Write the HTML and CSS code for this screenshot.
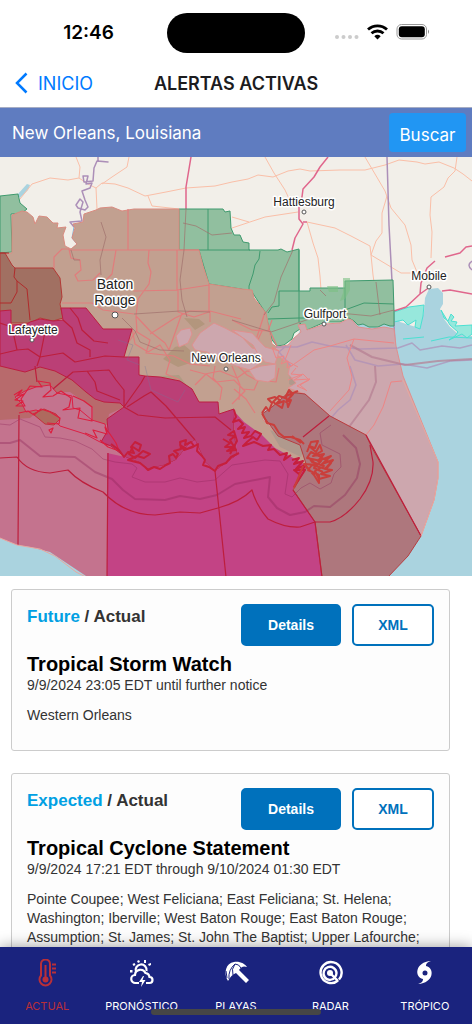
FILE: index.html
```html
<!DOCTYPE html>
<html lang="es">
<head>
    <meta charset="UTF-8">
    <meta name="viewport" content="width=device-width, initial-scale=1">
    <title>Alertas Activas</title>
    <link rel="stylesheet" href="styles.css">
</head>
<body>
  <div class="status">
    <span class="clock">12:46</span>
    <span class="island"></span>
    <span class="signals">
      <svg width="96" height="20" viewBox="0 0 96 20">
        <g fill="#ccc"><circle cx="3" cy="14" r="2"/><circle cx="9.500" cy="14" r="2"/><circle cx="16" cy="14" r="2"/><circle cx="22.500" cy="14" r="2"/></g>
        <g fill="none" stroke="#000" stroke-width="2.800"><path d="M34 6.500a14 14 0 0 1 19 0"/><path d="M37.500 10.300a9 9 0 0 1 12 0"/></g>
        <path d="M40.300 13.200a5 5 0 0 1 6.400 0L43.500 16.500z"/>
        <rect x="63" y="1.500" width="29.500" height="14.500" rx="4.500" fill="#fff" stroke="#999"/>
        <rect x="64.800" y="3.300" width="26" height="11" rx="3"/>
        <path d="M94 6.500q2 2.200 0 4.500z" fill="#888"/>
      </svg>
    </span>
  </div>
  <header class="nav">
    <a class="back" href="#">
      <svg width="13" height="22" viewBox="0 0 13 22"><path d="M11.500 1.500 2 11l9.500 9.500" fill="none" stroke="#007aff" stroke-width="2.500"/></svg>
      INICIO
    </a>
    <h1>ALERTAS ACTIVAS</h1>
  </header>
  <form class="search">
    <input type="text" id="place" aria-label="Lugar" value="New Orleans, Louisiana">
    <button type="button">Buscar</button>
  </form>

  <svg class="map" viewBox="0 157 472 419">
    <rect x="0" y="157" width="472" height="419" fill="#f2efe9"/>
    <!-- gulf and mobile bay -->
    <path fill="#aad3df" d="M0 400H270L300 330 394 314 400 322 419 328 424 312 425 298 429 289 438 288 443 293 443 304 440 309 444 319 450 327 458 334 472 336V577H0z"/>
    <path fill="#97e8dc" stroke="#4be0d2" d="M394 312 409 307 424 305 423 316 420 329 415 327 416 320 408 325 403 320 394 322z"/>
    <path fill="#97e8dc" stroke="#4be0d2" d="M441 310 444 318 448 321 451 314 454 317 451 321 457 322 455 326 472 325V334L467 338 462 334 449 340 455 336 458 332 450 325z"/>
    <path fill="none" stroke="#4be0d2" d="M403 339 424 337M431 341 449 337 472 338"/>
    <path fill="#aad3df" d="M17 195 27 184 30 185 28 190 20 198z"/>

    <!-- roads -->
    <g class="road">
      <path d="M0 210 20 199 32 184 50 178 68 180 79 178 88 184 96 188 102 183 115 184 128 188 145 196 166 192 186 188 215 186 232 182 248 179 258 175 273 177 288 171 300 169 310 171 340 170 365 170 385 165 399 160 417 162 425 164 439 162 454 168 463 174 472 181"/>
      <path d="M76 157 80 167 79 178M129 157 127 167 112 177 102 184M96 188 97 209M148 196 152 206 179 209M232 217 249 222M265 157 274 173 285 190 292 205M232 228 265 217 298 212M307 222 335 228 351 236 370 246 371 255 401 273 412 273M307 222 313 243 318 258 320 276 321 290M365 157 385 191 391 208 405 225 411 245 412 260 417 272M387 196 382 213 382 233 376 241 371 255 373 275 374 282M457 157 455 171 448 178 444 187 431 197 430 215 432 232 431 258M97 209 101 222"/>
    </g>
    <path class="interstate" d="M191 157 186 187V209M328 157 320 167 314 177 303 189 302 197 299 207V219L303 224 295 238 292 250M303 222 307 222M394 311 406 307 420 294 427 289 429 287M420 294 421 283 427 268 435 261M445 257 460 253 466 247 472 246M442 291 450 290 472 294"/>
    <path class="river" d="M98 157V161L108 162 97 161 94 168 93 181 84 182 83 176 88 176 86 184 92 183 90 188 82 191 85 200 88 207 85 210 78 208 76 205 80 199 83 202 80 212 82 221 70 222 74 227"/>
    <path class="river" d="M387 157 389 225 392 281 395 345"/>
    <path class="river" d="M472 261q-6 4 0 9"/>
    <path d="M74 227 72 238 77 244 71 250" fill="none" stroke="#7eb5d6"/>

    <!-- green counties -->
    <g class="green">
      <path d="M0 196 18 194 20 203 27 209 22 213 11 214 12 252 0 253z"/>
      <path d="M179 209H223L225 212 230 211 231 228 234 235H240L243 242 249 243V250H278L281 249 287 252 299 249V291H310V288H345V281L393 280 394 311V326L390 326 384 324 378 327 369 327 363 324 358 325 354 321 349 318 340 322 325 322 307 330 300 323 300 329 294 333 292 339 284 345 277 346 272 340 265 312 252 292 241 289 209 284 199 250 179 250z"/>
      <path d="M208 209V250M199 250H250M260 251 259 259 255 265 253 274 249 286V290M299 250V322M299 291H279V306L272 307 268 313M345 288V309M268 319 299 318 324 318 345 310 364 303 394 304" />
    </g>
    <path d="M327 286h11v6h-9zM343 278h7v12l-5 9-5 2 3-8z" fill="#7bbf83" opacity=".6"/>

    <!-- tan parishes -->
    <path class="tan" d="M12 215 22 211 27 212 33 217 35 224 39 216 47 217 53 223 58 223 57 228 66 227 63 235 65 246 71 249 77 244 72 238 75 228 73 224 83 222 84 214 96 210 100 208 112 207 122 211 134 209H179V250H199L203 266 209 284 241 289 252 290 254 298 266 313 272 344 277 347 284 355 296 368 300 385 300 394 280 402 263 411 263 420 280 436 310 450 307 470 290 462 240 440 180 400 60 350 0 320V254L12 253z"/>
    <path fill="#a98f71" d="M175 347 184 345 190 350 190 363 178 367 163 359zM184 318 199 319 205 324 195 330z" opacity=".6"/>
    <path fill="#b0998d" d="M270 430 290 438 304 448 301 457 280 447zM290 371 297 374 297 388 289 384z"/>
    <path fill="#a1987c" d="M160 376 179 375 187 386 178 386z" opacity=".6"/>
    <g class="parish">
      <path d="M128 209V250M70 250H199M177 250V290L209 285M209 284V312L194 317 178 312V290L134 291 139 291M116 250 112 274 105 281M149 250 148 263 151 272 149 284 138 299 136 316 151 332 165 343 169 350 182 313M210 311 241 319M210 311V322M54 293V268L54 257 62 249 69 249 71 258 80 260 81 270 75 275 78 281 93 280 100 273M136 316 137 332 150 340 146 353 174 356 190 364 210 366M150 334 175 318 190 311 210 311M137 330 128 343 118 333M62 303H92L103 310 134 314"/>
      <path d="M132 328 135 344 148 352 160 345 170 360 166 374 180 380M190 370 205 374 220 371 237 378 247 371 262 373M195 385 206 374 216 382 234 380 245 391 232 404M238 366 247 375 258 381 254 390 242 389M215 366 213 378 222 388 220 400M250 366 259 380 276 382 279 368M234 389 246 399 255 413M232 366 240 385 239 400"/>
      <path d="M232 320 252 330 270 331 277 346M262 331 257 342 242 338M265 312 255 343M268 331 272 320"/>
    </g>
    <path class="trunk" d="M186 209 184 250 180 280 182 300 187 317M122 318 135 331 140 342 160 350 184 351M134 314 180 311 210 312M101 222 106 237 100 260 101 275M183 223 196 226 212 235 232 233M71 250 74 260 80 260M293 250 281 277 274 302 264 315M232 320 271 332 330 312 350 314 371 316 394 310M320 290 326 296M376 282 380 315"/>

    <!-- open water, watch area -->
    <path class="rose" d="M277 347 288 345 294 338 301 332 298 325 305 324 307 330 325 324 340 323 348 319 352 320 358 327 372 329 384 327 394 329 396 346 403 376 438 462 438 478 434 500 421 536 371 446 366 435 330 416 305 394 288 388 296 383 288 374 290 365 276 354 268 355z"/>
    <path class="rose" d="M192 345 200 333 214 323 225 328 242 337 252 348 267 352 262 362 250 370 236 366 207 352 195 350zM176 336 181 330 190 328 192 334 188 343 179 347zM249 370 261 366 276 364 275 378 268 382 256 380z"/>
    <path class="rose" d="M232 330 253 345 258 354 265 362 275 364 279 351 265 347 252 333z"/>
    <path class="river faint" d="M276 347 297 347 312 342 330 346 360 349 398 348 412 343 420 350 442 346 460 348 472 345M346 345 355 360 378 366 403 364 427 368 450 361 472 360M286 346 279 352 291 366M350 366 356 385 350 400 338 410 326 424"/>
    <path class="purple" d="M375 366 376 382 369 400 343 435M350 345 372 357 405 365 438 361 472 359"/>
    <path class="coral" d="M290 367 314 350 330 346 354 339 394 343M354 339 347 358 352 377 349 390 330 411M402 381 391 382 383 407 374 425 366 435M288 380 303 374 309 380 300 385 307 391M291 345 285 360 298 367M279 351 272 347 276 358 284 356 281 364 288 361 287 368 293 365M296 368 291 374 302 375 294 380 310 379 297 386 306 390"/>

    <!-- west coast and storm area -->
    <path fill="#a17062" stroke="#b33a36" d="M0 253 5 253 12 265 15 268H53L60 278 62 297 60 304 63 318 53 321 40 318 30 323 0 323z"/>
    <path d="M15 268 14 277 17 281 17 292 11 303H0M17 281 27 289 30 320M0 253 9 253" fill="none" stroke="#b02b2b"/>
    <path fill="#c4738e" d="M0 415 20 405 60 380 125 395 125 460 110 460V576H86L68 564 50 552 30 547 17 545 0 538z"/>
    <path fill="#b86a6c" d="M0 360 70 360 124 400 122 408 109 414 107 425 93 420 93 408 70 392 60 392 30 418 0 420z"/>
    <path fill="#c4738e" stroke="#dc2045" d="M15 397 25 391 36 387 50 385 57 393 72 396 73 408 80 410 92 420 105 424 108 436 119 444 108 445 100 442 85 434 60 426 48 414 36 410 26 412 22 404z"/>
    <path fill="#ae6a5e" stroke="#c4303c" d="M33 414 44 409 56 414 60 419 54 425 45 424z"/>
    <path fill="#bb3f76" stroke="#bd1e40" d="M0 311 11 310V325L27 324 30 322 40 319 53 321 63 320 61 308 86 308 103 329 132 329 124 357H139V375L145 376 160 377 180 381 192 389 199 402 218 402 219 414 234 409V430L237 455 215 471 205 462 195 440 190 443 176 460 165 465 147 469 141 463 125 457 111 446 101 442 108 430 107 419 124 407 120 403 104 402 95 399 86 392 72 380 55 371 40 367 25 372 0 366z"/>
    <path fill="#c34385" d="M107 453 125 457 141 463 147 469 165 465 176 460 190 443 195 440 205 462 215 471 237 455 233 410 244 422 262 435 275 448 288 455 307 466 293 490 315 522 322 577H107z"/>
    <path fill="#ae777d" stroke="#b73d40" d="M262 414 272 407 289 392 305 394 330 416 366 435 371 446 421 536 408 556 388 577H322L315 522 293 490 307 467 300 445 278 436z"/>

    <g class="marine">
      <path d="M0 424 10 425 20 419 40 427 45 437 60 438 75 441 92 449 103 459 115 462 132 464 137 468 132 477 145 482 165 482 180 478 197 482 215 480 232 465 265 460 280 461 288 474 285 494 292 497 301 488 310 483 320 489 331 483 334 474 341 467 340 454 322 445 320 433 331 425"/>
      <path class="wide" d="M0 443H10L20 440 40 456 75 457 95 472 112 479 123 490 135 499 165 500 180 496 200 499 217 495 235 484 270 477 268 497 277 508 290 515 305 512 314 506 330 507 345 495 357 478 360 464 356 448 343 435"/>
    </g>
    <path class="red" d="M0 458 17 457Q27 472 50 473L68 470Q80 483 103 492 125 515 155 515L180 512 200 513 218 508Q240 502 252 490 256 505 268 519 285 528 300 527L315 522H330Q345 518 360 499 374 480 373 462L370 445"/>
    <path class="red" d="M19 415 18 545M108 453 107 577M215 471 226 577M293 490 315 522 322 577M366 435 421 536M303 437 329 416"/>
    <path class="red" d="M0 323 12 327 17 350 0 354M12 327 28 333 45 332 40 357 37 366M17 350 28 349 40 357 63 353 75 362 105 356 124 357M63 320 72 328 77 343 90 350 90 357M70 308 78 318 82 330 94 341 108 343M35 366 37 382M53 389 73 372 109 370 116 380 124 390 124 407M87 371 95 382 97 391 120 400M124 407 138 415 165 418 215 417 231 430M124 407 141 383 145 376M127 407 144 396 151 392 166 406 195 440"/>
    <path fill="none" stroke="#e8a79f" d="M0 538 17 545 40 549 55 556 76 572 86 577M403 380 438 462 438 478 434 500 421 536"/>
    <path fill="none" stroke="#73769a" opacity=".35" d="M145 366 151 390 178 402 185 390M118 340 133 345 127 360 140 365"/>

    <!-- marshes and barrier islands -->
    <g class="marsh">
      <path d="M14 395 22 390 17 396 24 394 15 400 23 401 16 406 25 406 21 399 30 386 42 387 38 381 50 383 51 390 43 397 53 396 61 391 71 398 69 407 63 410 80 408 78 418 92 421 92 407 84 401 73 396M85 433 97 438 93 430 107 434 105 427 112 437 116 443 119 451 108 447 100 440M19 413 28 411 34 415 41 409 50 412 60 418 59 424 47 423M49 430 53 428 51 433z"/>
      <path class="heavy" d="M111 444 119 450 124 457 128 452 134 453 131 447 135 442 141 445 139 451 133 447 129 454 135 458 143 451 150 454 144 458 137 456 128 460 140 463 145 467 148 470 154 467 160 469 166 465 170 463 169 456 173 454 176 458 178 454 174 451 181 449 180 442 186 440 185 445 191 442 194 446 187 449 180 445 184 450 193 447 198 444 197 451 202 456 205 460 203 465 209 467 215 471 218 466 226 463 231 457 239 453M223 439 230 443 225 447 233 447 227 451 236 450 230 440 235 436 228 435 234 431 237 441 230 454"/>
      <path class="heavy" d="M234 410 236 417 233 422 239 420 243 424 238 429 245 427 242 433 249 432 244 438 251 436 255 431 261 434 257 440 253 437 247 442 243 446 254 442 263 446 271 445 268 450 274 449 280 455 287 453 284 460 291 455M292 460 299 458 294 464 303 461 296 469 306 465 299 474 294 470 305 470 294 487"/>
      <path class="delta" d="M262 413 266 407 269 411 272 403 268 399 275 397 280 400 276 404 284 401 282 408 273 402 279 396 285 398 289 390 293 394 286 402 291 400 288 407 286 396 298 391M262 413 267 423 274 425 279 433 284 437 291 437 300 440 304 444M292 436 301 443"/>
      <path class="delta" d="M307 452 311 442 318 441 315 448 309 446 316 452 320 445 322 451 313 456 324 454 318 461 331 456 322 464 333 460 325 469 332 470 321 474 330 476 319 479 315 471 324 466 312 462 309 458 317 465 304 464 314 475 319 483 319 475 308 470 312 465 326 469 331 463 319 456 311 452 307 458 321 461 314 468 323 472M303 466 299 476 294 488"/>
    </g>

    <!-- cities -->
    <g class="pin"><circle cx="304" cy="212" r="2"/><circle cx="429" cy="287" r="2"/><circle cx="115" cy="315" r="3"/><circle cx="32" cy="340" r="2"/><circle cx="324" cy="324" r="2"/><circle cx="226" cy="369" r="2"/></g>
    <g class="city">
      <text x="304" y="206">Hattiesburg</text>
      <text x="429" y="280">Mobile</text>
      <text x="325" y="318">Gulfport</text>
      <text x="33" y="334">Lafayette</text>
      <text x="226" y="362">New Orleans</text>
      <text class="big" x="115" y="289">Baton</text>
      <text class="big" x="115" y="305">Rouge</text>
    </g>
  </svg>

  <main class="alerts">
    <article class="card">
      <div class="top">
        <p class="when"><span>Future</span> / Actual</p>
        <button type="button" class="details">Details</button>
        <button type="button" class="xml">XML</button>
      </div>
      <h2>Tropical Storm Watch</h2>
      <p class="time">9/9/2024 23:05 EDT until further notice</p>
      <p class="zones">Western Orleans</p>
    </article>
    <article class="card">
      <div class="top">
        <p class="when"><span>Expected</span> / Actual</p>
        <button type="button" class="details">Details</button>
        <button type="button" class="xml">XML</button>
      </div>
      <h2>Tropical Cyclone Statement</h2>
      <p class="time">9/9/2024 17:21 EDT through 9/10/2024 01:30 EDT</p>
      <p class="zones">Pointe Coupee; West Feliciana; East Feliciana; St. Helena; Washington; Iberville; West Baton Rouge; East Baton Rouge; Assumption; St. James; St. John The Baptist; Upper Lafourche;</p>
    </article>
  </main>

  <nav class="tabs">
    <a class="active" href="#">
      <svg viewBox="0 0 28 28"><g fill="none" stroke="currentColor" stroke-width="2"><path d="M8 16.500V5a4.500 4.500 0 0 1 9 0v11.500a6 6 0 1 1-9 0z"/><path d="M12.500 6v14M19 5.500h4M19 9.500h4M19 13.500h4"/></g><circle cx="12.500" cy="20.500" r="3" fill="currentColor"/></svg>
      ACTUAL
    </a>
    <a href="#">
      <svg viewBox="0 0 28 28"><g fill="none" stroke="currentColor" stroke-width="2.200"><path d="M11 24H7.500a4 4 0 0 1-.5-8 5.500 5.500 0 0 1 10.500-2 4.500 4.500 0 0 1 4 4 3 3 0 0 1 0 6H18"/><path d="M8 13a5.500 5.500 0 1 1 10.500-1"/></g><path d="m15 17-4 6h3l-1 5 4.500-7h-3l1.500-4zM2 11h2.500v2.500H2zM4.500 5l2-1 1 2-2 1zM9 2l2-1 1 2-2 1zM16 1h2v3h-2zM20 5l3-1v2l-2 1z" fill="currentColor"/></svg>
      PRONÓSTICO
    </a>
    <a href="#">
      <svg viewBox="0 0 28 28"><path d="M6 22C1 14 4 4 12 3 18 2 23 5 25 8Q20 6 17 11L27 21 24 24 14 14Q9 16 6 22z" fill="currentColor"/><path d="M7 20Q6 11 13 5M11 16Q9 10 13 5 17 5 19 9M4 12 5 19" fill="none" stroke="#1a237e"/></svg>
      PLAYAS
    </a>
    <a href="#">
      <svg viewBox="0 0 28 28"><g fill="none" stroke="currentColor" stroke-width="2.400"><path d="M22 21.500A10.500 10.500 0 1 1 23 20.500"/><path d="M19 18.500A6.500 6.500 0 1 1 20.500 14q0 3-2 4.500"/><path d="m14 14 8 8"/></g><circle cx="14" cy="14" r="3" fill="currentColor"/></svg>
      RADAR
    </a>
    <a href="#">
      <svg viewBox="0 0 28 28"><path fill="currentColor" fill-rule="evenodd" d="M20 2c-4 1-5 3-5 5 9 2 8 17-8 18 4-1 5-3 5-5C3 18 4 3 20 2zm-6 9.500a2.500 2.500 0 1 0 0 5 2.500 2.500 0 0 0 0-5z"/></svg>
      TRÓPICO
    </a>
    <span class="home"></span>
  </nav>
</body>
</html>
```
FILE: styles.css
```css
*{
  box-sizing: border-box;
}
body {
    display: flex;
    flex-direction: column;
    height: 100vh;
    margin: 0;
    overflow: hidden;
    background-color: #fff;
    color: #333;
    font-family: "Liberation Sans", Arial, sans-serif;
    }
h1, h2, p{
  margin: 0;
}
a{
  text-decoration: none;
}
button{
  font-family: inherit;
  padding: 0;
}
.status, .nav, .search, .tabs{
  flex: none;
  font-family: Inter, sans-serif;
}

.status{
  display: grid;
  grid-template-columns: 1fr 138px 1fr;
  align-items: center;
  height: 65px;
}
.clock{
  padding-left: 10px;
  text-align: center;
  font-size: 19px;
  font-weight: 600;
  color: #000;
}
.island{
  height: 40px;
  border-radius: 20px;
  background-color: #000;
}
.signals{
  padding-left: 29px;
}
.signals svg, .back svg{
  display: block;
}

.nav{
  display: grid;
  grid-template-columns: 1fr auto 1fr;
  align-items: center;
  height: 42px;
  padding: 0 15px 6px;
  font-size: 18px;
}
.nav h1{
  color: #1c1c1e;
  font-size: 18px;
  font-weight: 600;
}
.back{
  display: flex;
  align-items: center;
  gap: 10px;
  color: #007aff;
}

.search{
  display: flex;
  height: 50px;
  padding: 5px 6px 5px 12px;
  border-top: 1px solid #a6adc4;
  background-color: #5f7cc0;
}
.search input{
  flex: 1;
  min-width: 0;
  padding: 0;
  border: 0;
  background: none;
  color: #fff;
  font-family: inherit;
  font-size: 17px;
}
.search button{
  width: 77px;
  padding-top: 4px;
  border: 0;
  border-radius: 4px;
  background-color: #2196f3;
  color: #fff;
  font-size: 17px;
}

/* map */
.map{
  display: block;
  flex: none;
  width: 100%;
}
.map path{
  stroke-linejoin: round;
}
.road, .interstate, .river, .parish, .trunk, .purple, .coral, .marine, .red, .marsh{
  fill: none;
}
.road{
  stroke: #fabfa8;
}
.interstate{
  stroke: #e0668c;
  stroke-width: 1.500;
}
.river{
  stroke: #ac8fb8;
  stroke-width: 1.500;
}
.faint{
  opacity: .7;
}
.green{
  fill: #91bf9f;
  stroke: #3f9a6e;
}
.green path:last-child{
  fill: none;
}
.tan{
  fill: #c2a090;
  stroke: #d98b80;
}
.parish{
  stroke: #e17c7c;
  stroke-width: 1.200;
}
.trunk{
  stroke: #a0706c;
  opacity: .7;
}
.rose{
  fill: #cda7ae;
  stroke: #df908e;
}
.purple{
  stroke: #b57d91;
  stroke-width: 2;
  opacity: .7;
}
.coral{
  stroke: #ed8585;
}
.marine{
  stroke: #8c2357;
  opacity: .35;
}
.wide{
  stroke-width: 2;
}
.red{
  stroke: #bd1e3c;
  stroke-width: 1.200;
}
.marsh{
  stroke: #dc1f3f;
  stroke-width: 1.200;
}
.heavy{
  stroke: #c61f3c;
  stroke-width: 2;
}
.delta{
  stroke: #ca3e3b;
  stroke-width: 2;
}
.pin{
  fill: #fff;
  stroke: #555;
}
.city{
  fill: #222;
  stroke: #fff;
  stroke-width: 3px;
  stroke-linejoin: round;
  paint-order: stroke;
  text-anchor: middle;
  font-size: 12px;
}
.big{
  font-size: 14px;
}

/* alert cards */
.alerts{
  flex: 1;
  display: flex;
  flex-direction: column;
  gap: 22px;
  min-height: 0;
  padding: 13px 22px 0 11px;
  overflow: hidden;
}
.card{
  flex: none;
  padding: 14px 15px 25px 15px;
  border: 1px solid #ccc;
  border-radius: 3px;
  background-color: #fdfdfd;
  font-size: 14px;
  line-height: 19px;
}
.top{
  display: flex;
  gap: 11px;
  height: 48px;
}
.when{
  flex: 1;
  padding-top: 3px;
  font-size: 17px;
  font-weight: bold;
}
.when span{
  color: #00a0e3;
}
.top button{
  height: 42px;
  border: 2px solid #0071bc;
  border-radius: 5px;
  font-size: 14px;
  font-weight: bold;
}
.details{
  width: 100px;
  background-color: #0071bc;
  color: #fff;
}
.xml{
  width: 82px;
  background-color: #fff;
  color: #0071bc;
}
.card h2{
  color: #000;
  font-size: 20px;
  line-height: 24px;
}
.zones{
  padding-top: 11px;
}

/* bottom tabs */
.tabs{
  position: relative;
  display: grid;
  grid-template-columns: repeat(5, 1fr);
  height: 77px;
  padding-top: 12px;
  background-color: #1a237e;
  box-shadow: 0 0 14px rgba(0, 0, 0, .4);
}
.tabs a{
  display: flex;
  flex-direction: column;
  align-items: center;
  gap: 12px;
  color: #fff;
  font-size: 11px;
  line-height: 14px;
}
.tabs svg{
  width: 28px;
  height: 28px;
}
.tabs .active{
  color: #b92f38;
}
.home{
  position: absolute;
  bottom: 9px;
  left: 50%;
  width: 170px;
  height: 6px;
  margin-left: -85px;
  border-radius: 3px;
  background-color: #464646;
}
```
